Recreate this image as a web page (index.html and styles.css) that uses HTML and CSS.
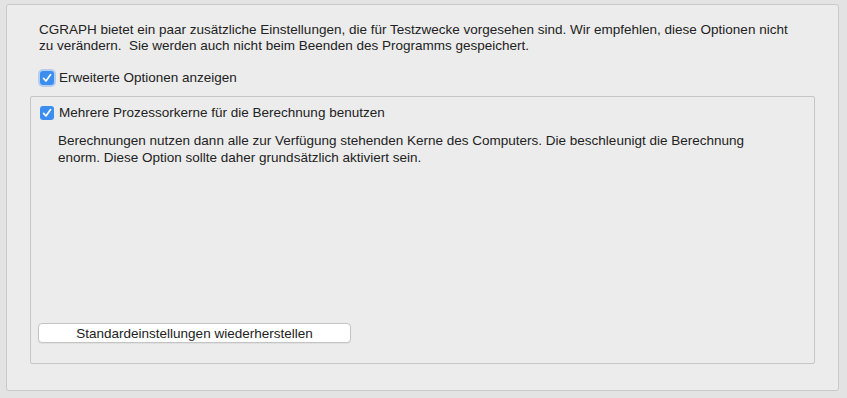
FILE: index.html
```html
<!DOCTYPE html>
<html lang="de">
<head>
    <meta charset="UTF-8">
    <title>CGRAPH - Erweiterte Einstellungen</title>
    <link rel="stylesheet" href="styles.css">
</head>
<body>
    <div class="pane">
        <p class="intro">CGRAPH bietet ein paar zusätzliche Einstellungen, die für Testzwecke vorgesehen sind. Wir empfehlen, diese Optionen nicht zu verändern.&nbsp; Sie werden auch nicht beim Beenden des Programms gespeichert.</p>

        <label class="check focus">
            <span class="box"><svg viewBox="0 0 14 14"><path d="M3.6 7.4 L6 10 L10.6 3.6" /></svg></span>
            Erweiterte Optionen anzeigen
        </label>

        <div class="group">
            <label class="check">
                <span class="box"><svg viewBox="0 0 14 14"><path d="M3.6 7.4 L6 10 L10.6 3.6" /></svg></span>
                Mehrere Prozessorkerne für die Berechnung benutzen
            </label>
            <p class="hint">Berechnungen nutzen dann alle zur Verfügung stehenden Kerne des Computers. Die beschleunigt die Berechnung enorm. Diese Option sollte daher grundsätzlich aktiviert sein.</p>

            <button class="reset-btn">Standardeinstellungen wiederherstellen</button>
        </div>
    </div>
</body>
</html>
```

FILE: styles.css
```css
* {
    margin: 0;
    padding: 0;
    box-sizing: border-box;
}

body {
    background: #e3e3e3;
    font-family: "Liberation Sans", Arial, sans-serif;
    font-size: 13.5px;
    color: #222;
    width: 847px;
    height: 398px;
    padding: 4px 8px 0 6px;
}

.pane {
    height: 387px;
    background: #ececec;
    border: 1px solid #c9c9c9;
    border-radius: 3px;
    padding: 17px 23px 0 23px;
    display: flex;
    flex-direction: column;
}

.intro {
    line-height: 16px;
    padding: 0 20px 0 9px;
}

.check {
    display: flex;
    align-items: center;
    gap: 5px;
    height: 18px;
    line-height: 16px;
}

.pane > .check {
    margin-top: 15px;
    padding-left: 10px;
}

.box {
    width: 14px;
    height: 14px;
    border-radius: 3px;
    background: #3b8ef0;
    display: flex;
}

.focus .box {
    box-shadow: 0 0 0 2px rgba(80, 150, 245, 0.35);
}

.box svg {
    width: 14px;
    height: 14px;
    fill: none;
    stroke: #fff;
    stroke-width: 1.7;
    stroke-linecap: round;
    stroke-linejoin: round;
}

.group {
    margin-top: 9px;
    height: 268px;
    border: 1px solid #c6c6c6;
    border-radius: 2px;
    padding: 7px 0 0 9px;
    display: flex;
    flex-direction: column;
}

.hint {
    margin-top: 10px;
    padding: 0 60px 0 18px;
    line-height: 17px;
}

.reset-btn {
    margin-top: auto;
    margin-bottom: 20px;
    margin-left: -2px;
    width: 313px;
    height: 20px;
    background: #fff;
    border: 1px solid #c4c4c4;
    border-radius: 4px;
    font-family: inherit;
    font-size: 13.5px;
    color: #222;
    box-shadow: 0 1px 1px rgba(0, 0, 0, 0.06);
}
```
